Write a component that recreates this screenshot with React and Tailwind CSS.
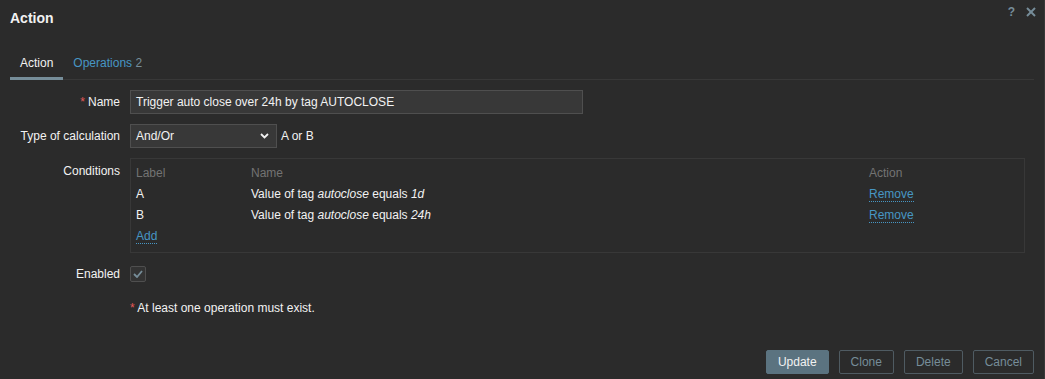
import React from 'react';

const CONDITIONS = [
  { label: 'A', value: '1d' },
  { label: 'B', value: '24h' },
];

const linkCls = 'text-[#4796c4] border-b border-dotted border-[#4796c4] leading-[13px] cursor-pointer';

function Row({ label, required, children, labelCls = 'items-center' }) {
  return (
    <div className="flex gap-[10px]">
      <div className={`w-[110px] flex justify-end ${labelCls} text-[#f2f2f2]`}>
        {required && <span className="text-[#e45959] mr-[3px]">*</span>}
        {label}
      </div>
      <div className="flex-1 flex items-center">{children}</div>
    </div>
  );
}

export default function App() {
  return (
    <div className="h-[379px] w-full bg-[#2b2b2b] text-[12px] leading-[14px] text-[#f2f2f2] relative overflow-hidden border-r border-[#383838]"
      style={{ fontFamily: '"Liberation Sans", Arial, sans-serif' }}>

      {/* ── Header ── */}
      <div className="flex items-start justify-between pl-[10px] pr-[8px] pt-[10px]">
        <h4 className="text-[14px] leading-[16px] font-bold text-[#f2f2f2]">Action</h4>
        <div className="flex items-center gap-[11px] -mt-[5px] text-[#768d99]">
          <span className="text-[12px] font-bold">?</span>
          <svg width="10" height="10" viewBox="0 0 10 10" stroke="currentColor" strokeWidth="2">
            <line x1="1" y1="1" x2="9" y2="9" /><line x1="9" y1="1" x2="1" y2="9" />
          </svg>
        </div>
      </div>

      {/* ── Tabs ── */}
      <div className="mx-[10px] mt-[23px] flex border-b border-[#383838]">
        <div className="px-[10px] pt-[7px] pb-[7px] border-b-[3px] border-[#768d99] -mb-px text-[#f2f2f2]">Action</div>
        <div className="px-[10px] pt-[7px] pb-[7px] border-b-[3px] border-transparent -mb-px">
          <span className="text-[#4796c4]">Operations</span> <span className="text-[#768d99]">2</span>
        </div>
      </div>

      {/* ── Form ── */}
      <div className="pl-[10px] pt-[10px] flex flex-col gap-[10px]">
        <Row label="Name" required>
          <div className="w-[453px] h-[24px] bg-[#383838] border border-[#4f4f4f] px-[5px] flex items-center">
            Trigger auto close over 24h by tag AUTOCLOSE
          </div>
        </Row>

        <Row label="Type of calculation">
          <div className="w-[147px] h-[24px] bg-[#383838] border border-[#4f4f4f] pl-[5px] pr-[7px] flex items-center justify-between">
            <span>And/Or</span>
            <svg width="9" height="6" viewBox="0 0 9 6" fill="none" stroke="#f2f2f2" strokeWidth="1.8">
              <polyline points="1,1 4.5,4.5 8,1" />
            </svg>
          </div>
          <span className="ml-[4px]">A or B</span>
        </Row>

        <Row label="Conditions" labelCls="items-start pt-[6px]">
          <div className="w-[895px] border border-[#383838] pt-[3px] pb-[3px] px-[5px]">
            <div className="grid grid-cols-[115px_618px_1fr] h-[21px] items-center text-[#737373]">
              <span>Label</span><span>Name</span><span>Action</span>
            </div>
            {CONDITIONS.map(c => (
              <div key={c.label} className="grid grid-cols-[115px_618px_1fr] h-[21px] items-center">
                <span>{c.label}</span>
                <span>Value of tag <i>autoclose</i> equals <i>{c.value}</i></span>
                <span><span className={linkCls}>Remove</span></span>
              </div>
            ))}
            <div className="h-[24px] flex items-center">
              <span className={linkCls}>Add</span>
            </div>
          </div>
        </Row>

        <Row label="Enabled">
          <div className="h-[22px] flex items-center">
            <div className="w-[16px] h-[16px] bg-[#333333] border border-[#4f4f4f] rounded-[2px] flex items-center justify-center">
              <svg width="10" height="8" viewBox="0 0 10 8" fill="none" stroke="#768d99" strokeWidth="1.8">
                <polyline points="1,4 4,7 9,1" />
              </svg>
            </div>
          </div>
        </Row>

        <div className="pl-[120px] mt-[6px]">
          <span className="text-[#e45959]">*</span> At least one operation must exist.
        </div>
      </div>

      {/* ── Footer ── */}
      <div className="absolute bottom-[5px] right-[10px] flex gap-[10px]">
        <button className="h-[24px] px-[11px] bg-[#5b7380] text-[#f2f2f2] rounded-[2px] border border-[#5b7380]">Update</button>
        <button className="h-[24px] px-[11px] border border-[#4f5b62] text-[#768d99] rounded-[2px]">Clone</button>
        <button className="h-[24px] px-[11px] border border-[#4f5b62] text-[#768d99] rounded-[2px]">Delete</button>
        <button className="h-[24px] px-[11px] border border-[#4f5b62] text-[#768d99] rounded-[2px]">Cancel</button>
      </div>
    </div>
  );
}
